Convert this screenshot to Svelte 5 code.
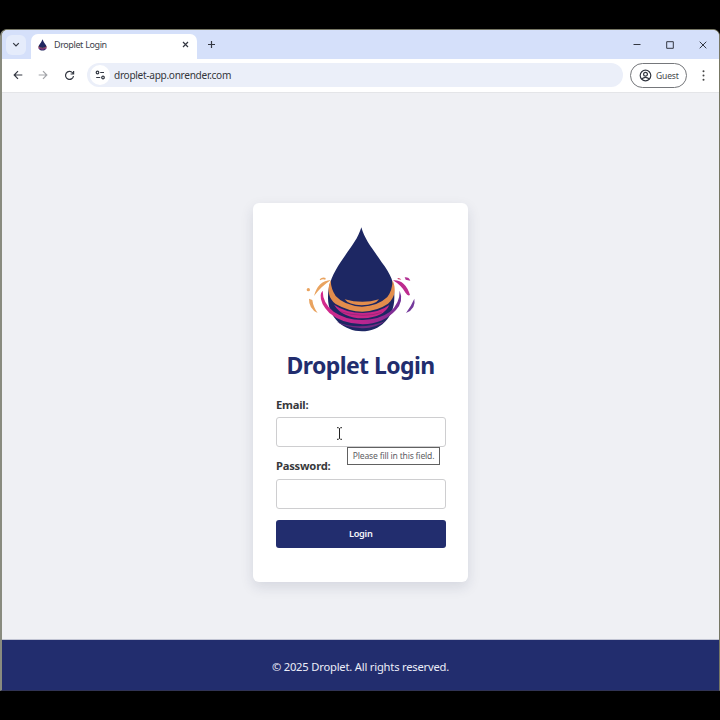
<script>
  let email = $state('');
  let password = $state('');
</script>

{#snippet rings()}
  <path d="M104 193C91 224 99 249 119 264Q159 287 199 287Q244 285 276 263C298 245 301 219 290 193Q289 224 274 243Q246 270 198 272Q145 269 119 240Q105 220 104 193Z" fill="#e38d4c" />
  <path d="M146 250Q200 265 249 250Q238 267 197 268Q158 267 146 250Z" fill="#e38d4c" />
  <path d="M80 224Q80 262 113 287Q151 313 201 312Q249 311 281 288Q312 262 311 224Q324 255 300 282Q263 323 200 325Q139 324 100 291Q72 263 74 238Q74 230 80 224Z" fill="url(#ringColor)" />
  <path d="M114 266Q150 291 201 291Q249 290 280 267Q264 304 201 307Q139 306 114 266Z" fill="#c72789" />
  <path d="M133 287Q163 297 201 298Q233 298 257 289" fill="none" stroke="#8c2472" stroke-width="2" />
  <path d="M122 318Q192 345 269 315Q233 340 191 336Q148 333 122 318Z" fill="#702a82" />
{/snippet}

<div class="screen">
  <div class="browser">
    <header class="tabs">
      <button class="tab-search" aria-label="Search tabs"><svg width="8" height="6" viewBox="0 0 8 6"><path d="M1.2 1.2 4 4l2.800-2.800" /></svg></button>
      <div class="tab">
        <svg class="favicon" width="11" height="12" viewBox="0 0 11 12"><path d="M5.500.3Q6.300 3 9 6.200C10.500 9 8.500 11.600 5.500 11.600S.5 9 2 6.200Q4.700 3 5.500.3Z" fill="#202760" /><path d="M1 7.500Q5.500 11 10 7.500" fill="none" stroke="#bd6b62" stroke-width=".8" /><path d="M1.500 9.200Q5.500 11.500 9.500 9.200" fill="none" stroke="#a63489" stroke-width=".8" /></svg>
        <span>Droplet Login</span>
        <svg class="close" width="7" height="7" viewBox="0 0 7 7"><path d="m1 1 5 5M6 1 1 6" /></svg>
      </div>
      <svg class="plus" width="9" height="9" viewBox="0 0 9 9"><path d="M4.500 1v7M1 4.500h7" /></svg>
      <div class="controls">
        <svg width="8" height="9" viewBox="0 0 8 9"><path d="M.5 4.500h7" /></svg>
        <svg width="8" height="8" viewBox="0 0 8 8"><path d="M.7.700h6.600v6.600H.7z" /></svg>
        <svg width="8" height="8" viewBox="0 0 8 8"><path d="m.7.700 6.600 6.600M7.300.7.700 7.300" /></svg>
      </div>
    </header>
    <nav class="toolbar">
      <svg class="back" width="10" height="10" viewBox="0 0 10 10"><path d="M9.300 5H1.500M5 1.200 1.200 5 5 8.800" /></svg>
      <svg class="forward" width="10" height="10" viewBox="0 0 10 10"><path d="M.7 5h7.800M5 1.200 8.800 5 5 8.800" /></svg>
      <svg class="reload" width="11" height="11" viewBox="0 0 11 11"><path d="M9.500 6A4 4 0 1 1 8.500 2.700L9.500 3.700M9.600 1v3h-3" /></svg>
      <div class="address">
        <div class="site"><svg width="11" height="10" viewBox="0 0 11 10"><circle cx="2.500" cy="2.500" r="1.300" /><path d="M5.200 2.500H9M1.200 7.500h4" /><circle cx="8" cy="7.500" r="1.300" /></svg></div>
        <span>droplet-app.onrender.com</span>
      </div>
      <button class="guest"><svg width="13" height="13" viewBox="0 0 13 13"><circle cx="6.500" cy="6.500" r="5.300" /><circle cx="6.500" cy="5.200" r="1.900" /><path d="M2.700 10Q6.500 6.600 10.300 10" /></svg><span>Guest</span></button>
      <svg class="more" width="3" height="11" viewBox="0 0 3 11"><circle cx="1.500" cy="1.300" r="1" /><circle cx="1.500" cy="5.500" r="1" /><circle cx="1.500" cy="9.700" r="1" /></svg>
    </nav>
    <main>
      <form onsubmit={(event) => event.preventDefault()}>
        <svg class="logo" width="130" height="125" viewBox="0 0 390 375">
          <defs><linearGradient id="ringColor"><stop offset="0" stop-color="#d52b8b" /><stop offset=".55" stop-color="#b62690" /><stop offset="1" stop-color="#703096" /></linearGradient></defs>
          <path d="M196 34C206 72 233 102 257 139C286 177 296 202 295 245C295 305 251 346 198 346S96 306 96 247C95 204 112 172 134 138C159 100 185 72 196 34Z" fill="#1d2763" />
          {@render rings()}
          <g fill="#e9a35f"><path d="M105 192Q66 194 54 240Q75 211 105 192Z" /><path d="M71 190Q79 182 89 186L88 191Q78 188 73 193Z" /><circle cx="37" cy="221" r="5" /><path d="M39 248Q38 278 65 291Q52 274 49 252Z" /></g>
          <path d="M291 193Q327 190 342 237Q335 241 329 231Q316 208 291 193Z" fill="#bd2b8e" /><path d="M304 187Q310 183 316 191L306 190Z" fill="#cd4a70" /><path d="M326 184Q339 183 343 194L329 191Z" fill="#b23193" /><path d="M355 248Q361 278 330 291Q345 271 355 248Z" fill="#74399b" />
        </svg>
        <h1>Droplet Login</h1>
        <label for="email">Email:</label>
        <div class="field">
          <input id="email" type="email" bind:value={email} />
          <svg class="cursor" width="7" height="13" viewBox="0 0 7 13"><path d="M1 .7h1.500l1 1 1-1H6M3.500 1.700v9.600M1 12.300h1.500l1-1 1 1H6" /></svg>
          <div class="tip"><span>Please fill in this field.</span></div>
        </div>
        <label for="password">Password:</label>
        <input id="password" type="password" bind:value={password} />
        <button class="login"><span>Login</span></button>
      </form>
    </main>
    <footer><span>© 2025 Droplet. All rights reserved.</span></footer>
  </div>
</div>

<style>
  :global(body) { margin: 0; background: #000; }
  * { box-sizing: border-box; }
  button { padding: 0; border: 0; font: inherit; }
  svg { display: block; flex: none; }
  span { white-space: nowrap; }
  .screen { width: 720px; height: 720px; padding-top: 29px; overflow: hidden; background: #000; font-family: "Noto Sans", "Open Sans", sans-serif; }
  .browser { width: 720px; height: 662px; border: 1px solid #777764; border-left: 2px solid #898b7f; border-bottom: 1px solid #303354; border-radius: 7px 7px 0 0; overflow: hidden; background: #eff0f4; }
  .tabs { height: 29px; display: flex; align-items: center; background: #d5e0fa; }
  .tabs svg, .toolbar svg { fill: none; stroke: #343842; stroke-width: 1.200; }
  .tabs .favicon { stroke: none; margin-left: 6px; }
  .tab-search { width: 20px; height: 20px; margin-left: 4px; display: grid; place-items: center; border-radius: 6px; background: #e5ecfb; }
  .tab { width: 166px; height: 25px; margin: 4px 0 0 5px; display: flex; align-items: center; background: #fff; border-radius: 7px 7px 0 0; padding-bottom: 4px; }
  .tab span { width: 53px; margin-left: 6px; font: 9px "Noto Sans", sans-serif; letter-spacing: -.43px; word-spacing: .3px; color: #41434b; }
  .tab span { letter-spacing: -.4px; }
  .close { margin-left: 75px; }
  .plus { margin-left: 10px; }
  .controls { margin-left: auto; margin-right: 12px; display: flex; gap: 25px; align-items: center; }
  .controls svg { stroke-width: 1; }
  .toolbar { height: 34px; display: flex; align-items: center; background: #fff; border-bottom: 1px solid #e4e5e8; padding: 0 14px 1px 11px; }
  .forward { margin-left: 15px; opacity: .45; }
  .reload { margin-left: 16px; }
  .address { width: 536px; height: 24px; margin-left: 12px; display: flex; align-items: center; padding-left: 3px; border-radius: 12px; background: #ebeff9; }
  .site { width: 20px; height: 20px; display: grid; place-items: center; border-radius: 50%; background: #fff; }
  .address span { margin-left: 4px; color: #34363b; font-size: 10.100px; letter-spacing: -.3px; }
  .guest { width: 57px; height: 25px; display: flex; align-items: center; flex: none; margin-left: 7px; padding-left: 8px; border: 1px solid #75777b; border-radius: 13px; background: #fff; }
  .guest span { margin-left: 4px; color: #43464a; font-size: 8.500px; letter-spacing: -.15px; }
  .toolbar .more { margin-left: auto; fill: #444; stroke: none; }
  main { height: 547px; padding-top: 110px; border-bottom: 1px solid #c1c4d3; }
  form { width: 215px; height: 379px; margin-left: 251px; padding: 13px 23px 0; background: #fff; border-radius: 6px; box-shadow: 0 5px 13px #20264c20; }
  .logo { margin-left: 20px; }
  h1 { width: 169px; height: 49px; margin: 0; line-height: 49px; text-align: center; white-space: nowrap; font-size: 23px; font-weight: 700; letter-spacing: -.58px; color: #222d6e; }
  label { display: block; height: 27px; line-height: 29px; font-size: 11.200px; font-weight: 700; letter-spacing: -.22px; color: #37383b; }
  label[for="password"] { line-height: 28px; }
  .field { position: relative; height: 35px; }
  input { display: block; width: 169.500px; height: 30px; padding: 6px; border: 1px solid #ceced0; border-radius: 3px; background: #fff; font: 11px "Noto Sans", sans-serif; outline: none; }
  .cursor { position: absolute; left: 60px; top: 10px; fill: none; stroke: #222; stroke-width: 1; }
  .tip { position: absolute; left: 71px; top: 30px; width: 93px; height: 18px; display: grid; place-items: center; border: 1px solid #616161; background: #fff; font-size: 8.600px; letter-spacing: -.2px; color: #606064; }
  .login { width: 169.500px; height: 28px; margin-top: 11px; padding-bottom: 1px; border-radius: 3px; background: #222d6e; color: #f4f4fa; font-size: 9.200px; font-weight: 600; letter-spacing: -.25px; }
  footer { height: 51px; padding-top: 1px; display: grid; place-items: center; background: #222d6e; color: #eceef8; font-size: 11.200px; letter-spacing: -.2px; }
</style>
